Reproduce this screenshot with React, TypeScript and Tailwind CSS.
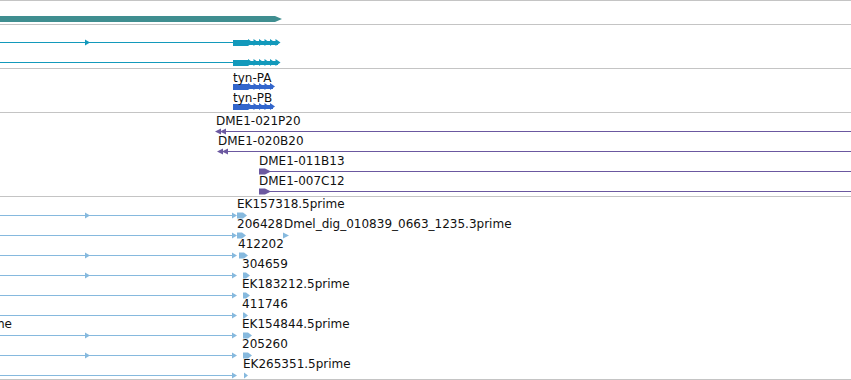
import type { ReactNode } from 'react'

const TEAL = '#3f8e90'
const CYAN = '#1399bb'
const BLUE = '#3366cc'
const PURPLE = '#6b58a0'
const SKY = '#86b9de'

// draws in page coordinates, shifted up by the track's top
function Canvas({ top, children }: { top: number; children: ReactNode }) {
  return (
    <svg className="absolute inset-0 h-full w-full overflow-visible">
      <g transform={`translate(0 ${-top})`}>{children}</g>
    </svg>
  )
}

function Chevrons({ x, y, end, color }: { x: number; y: number; end: number; color: string }) {
  const heads: number[] = []
  for (let h = x + 15; h <= end - 5; h += 5.5) heads.push(h)
  return (
    <g fill={color}>
      <rect x={x} y={y - 3} width={15} height={6} shapeRendering="crispEdges" />
      <rect x={x + 15} y={y - 2} width={end - x - 19} height={4} shapeRendering="crispEdges" />
      {heads.map((h) => (
        <path key={h} d={`M${h} ${y - 3.5}L${h + 5} ${y}L${h} ${y + 3.5}Z`} />
      ))}
    </g>
  )
}

function Label({ pos, children }: { pos: string; children: ReactNode }) {
  return (
    <span className={`absolute whitespace-nowrap text-[12px] leading-[14px] text-[#111] ${pos}`}>{children}</span>
  )
}

const Rule = () => <div className="h-px bg-[#c4c4c4]" />

const estRows = [
  { mid: true, exon: [237, 247] },
  { mid: false, exon: [237, 246] },
  { mid: true, exon: [239, 248] },
  { mid: true, exon: [243, 250] },
  { mid: false, exon: [243, 250] },
  { mid: false, exon: [243, 248] },
  { mid: true, exon: [243, 252] },
  { mid: true, exon: [243, 252] },
  { mid: false, exon: [244, 248] },
]

export default function App() {
  return (
    <div className="w-[851px] h-[380px] overflow-hidden bg-white font-['DejaVu_Sans',sans-serif]">
      <Rule />
      {/* gene span */}
      <div className="relative h-[23px]">
        <Canvas top={1}>
          <path d="M0 16H275L282 19L275 22H0Z" fill={TEAL} />
        </Canvas>
      </div>
      <Rule />
      {/* transcripts */}
      <div className="relative h-[43px]">
        <Canvas top={25}>
          <g stroke={CYAN} shapeRendering="crispEdges">
            <line x1={0} x2={233} y1={42.5} y2={42.5} />
            <line x1={0} x2={233} y1={62.5} y2={62.5} />
          </g>
          <path d="M85 39.5L90 42.5L85 45.5Z" fill={CYAN} />
          <Chevrons x={233} y={42.5} end={282} color={CYAN} />
          <Chevrons x={233} y={62.5} end={282} color={CYAN} />
        </Canvas>
      </div>
      <Rule />
      {/* proteins */}
      <div className="relative h-[43px]">
        <Canvas top={69}>
          <Chevrons x={233} y={86.5} end={277} color={BLUE} />
          <Chevrons x={233} y={106.5} end={277} color={BLUE} />
        </Canvas>
        <Label pos="left-[233px] top-[2px]">tyn-PA</Label>
        <Label pos="left-[233px] top-[22px]">tyn-PB</Label>
      </div>
      <Rule />
      {/* BAC ends */}
      <div className="relative h-[83px]">
        <Canvas top={113}>
          <g stroke={PURPLE} shapeRendering="crispEdges">
            <line x1={216} x2={851} y1={131.5} y2={131.5} />
            <line x1={218} x2={851} y1={151.5} y2={151.5} />
            <line x1={259} x2={851} y1={171.5} y2={171.5} />
            <line x1={259} x2={851} y1={191.5} y2={191.5} />
          </g>
          <g fill={PURPLE}>
            <path d="M215 131.5L221 128.5L221 134.5Z M220 131.5L226 128.5L226 134.5Z" />
            <path d="M217 151.5L223 148.5L223 154.5Z M222 151.5L228 148.5L228 154.5Z" />
            <path d="M259 168.5H265L271 171.5L265 174.5H259Z" />
            <path d="M259 188.5H265L271 191.5L265 194.5H259Z" />
          </g>
        </Canvas>
        <Label pos="left-[216px] top-[1px]">DME1-021P20</Label>
        <Label pos="left-[218px] top-[21px]">DME1-020B20</Label>
        <Label pos="left-[259px] top-[41px]">DME1-011B13</Label>
        <Label pos="left-[259px] top-[61px]">DME1-007C12</Label>
      </div>
      <Rule />
      {/* ESTs */}
      <div className="relative h-[182px]">
        <Canvas top={197}>
          {estRows.map((r, i) => {
            const y = 215.5 + i * 20
            const [a, b] = r.exon
            return (
              <g key={i}>
                <line x1={0} x2={233} y1={y} y2={y} stroke={SKY} shapeRendering="crispEdges" />
                <g fill={SKY}>
                  {r.mid && <path d={`M85 ${y - 3}L90 ${y}L85 ${y + 3}Z`} />}
                  <path d={`M232 ${y - 3}L237 ${y}L232 ${y + 3}Z`} />
                  <path d={`M${a} ${y - 3}H${b - 4}L${b} ${y}L${b - 4} ${y + 3}H${a}Z`} />
                </g>
              </g>
            )
          })}
          <path d="M283 232.5L289 235.5L283 238.5Z" fill={SKY} />
        </Canvas>
        <Label pos="left-[237px] top-[0px]">EK157318.5prime</Label>
        <Label pos="left-[237px] top-[20px]">206428</Label>
        <Label pos="left-[284px] top-[20px]">Dmel_dig_010839_0663_1235.3prime</Label>
        <Label pos="left-[238px] top-[40px]">412202</Label>
        <Label pos="left-[242px] top-[60px]">304659</Label>
        <Label pos="left-[242px] top-[80px]">EK183212.5prime</Label>
        <Label pos="left-[242px] top-[100px]">411746</Label>
        <Label pos="right-[839px] top-[120px]">EK154790.5prime</Label>
        <Label pos="left-[242px] top-[120px]">EK154844.5prime</Label>
        <Label pos="left-[242px] top-[140px]">205260</Label>
        <Label pos="left-[243px] top-[160px]">EK265351.5prime</Label>
      </div>
      <Rule />
    </div>
  )
}
